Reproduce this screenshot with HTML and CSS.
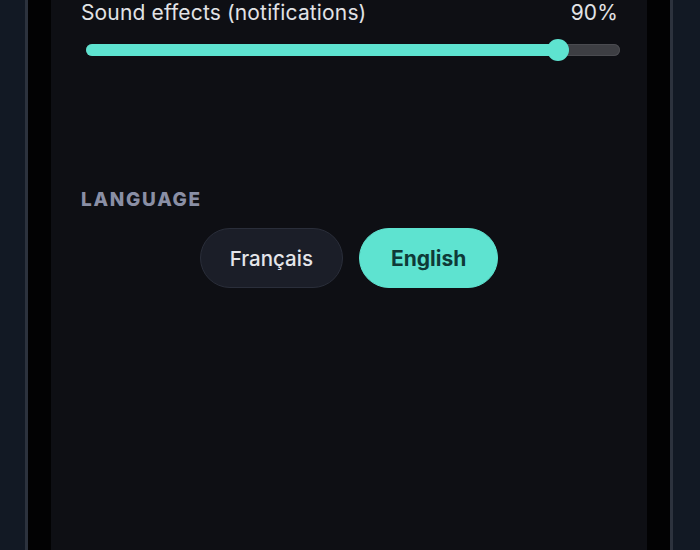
FILE: index.html
```html
<!DOCTYPE html>
<html lang="en">
<head>
<meta charset="utf-8">
<title>Settings</title>
<link rel="stylesheet" href="styles.css">
</head>
<body>
<div class="frame">
  <main class="panel">
    <section class="setting">
      <div class="setting-row">
        <span class="setting-label">Sound effects (notifications)</span>
        <span class="setting-value">90%</span>
      </div>
      <div class="slider" style="--value: 0.9">
        <div class="slider-track">
          <div class="slider-fill"></div>
        </div>
        <div class="slider-thumb"></div>
      </div>
    </section>

    <section class="language">
      <h2 class="section-title">LANGUAGE</h2>
      <div class="lang-options">
        <button class="lang-btn">Français</button>
        <button class="lang-btn is-active">English</button>
      </div>
    </section>
  </main>
</div>
</body>
</html>
```

FILE: styles.css
```css
html, body {
  margin: 0;
  height: 100%;
}

body {
  background: #121924;
  font-family: Inter, "Noto Sans", sans-serif;
  overflow: hidden;
}

/* dark backdrop strip that holds the settings panel */
.frame {
  margin-left: 25px;
  width: 596px;
  height: 100%;
  padding: 0 23px;
  background: #020203;
  border-left: 3px solid #2c323d;
  border-right: 3px solid #2c323d;
}

.panel {
  height: 100%;
  background: #0e0f14;
  padding: 1px 30px 0;
  box-sizing: border-box;
}

.setting-row {
  display: flex;
  justify-content: space-between;
  align-items: center;
  font-size: 21px;
  line-height: 24px;
  letter-spacing: 0.15px;
  color: #e2e3e6;
}

.setting-value {
  margin-right: -1px;
}

/* volume slider */
.slider {
  position: relative;
  margin: 14px -3px 0 5px;
  height: 22px;
  display: flex;
  align-items: center;
}

.slider-track {
  flex: 1;
  height: 12px;
  border-radius: 6px;
  background: #3d3e43;
  box-shadow: inset 0 0 0 1px #4a4b50;
  overflow: hidden;
}

.slider-fill {
  height: 100%;
  width: calc(11px + var(--value) * (100% - 22px));
  background: #5ee3d0;
}

.slider-thumb {
  position: absolute;
  top: 0;
  left: calc(var(--value) * (100% - 22px));
  width: 22px;
  height: 22px;
  border-radius: 50%;
  background: #5ee3d0;
}

/* language picker */
.language {
  margin-top: 128px;
}

.section-title {
  margin: 0;
  font-size: 19px;
  line-height: 22px;
  font-weight: 800;
  letter-spacing: 1.7px;
  color: #8a8fa5;
}

.lang-options {
  display: flex;
  justify-content: center;
  gap: 16px;
  margin-top: 17px;
}

.lang-btn {
  height: 60px;
  padding: 0 29px;
  border-radius: 30px;
  font-family: inherit;
  font-size: 20.5px;
  font-weight: 500;
  border: 1px solid #2a2e3a;
  background: #1b1e28;
  color: #e4e5ea;
}

.lang-btn.is-active {
  border-color: #5ee3d0;
  background: #5ee3d0;
  color: #0f3a37;
  font-size: 21px;
  font-weight: 700;
  padding: 0 31px;
}
```
